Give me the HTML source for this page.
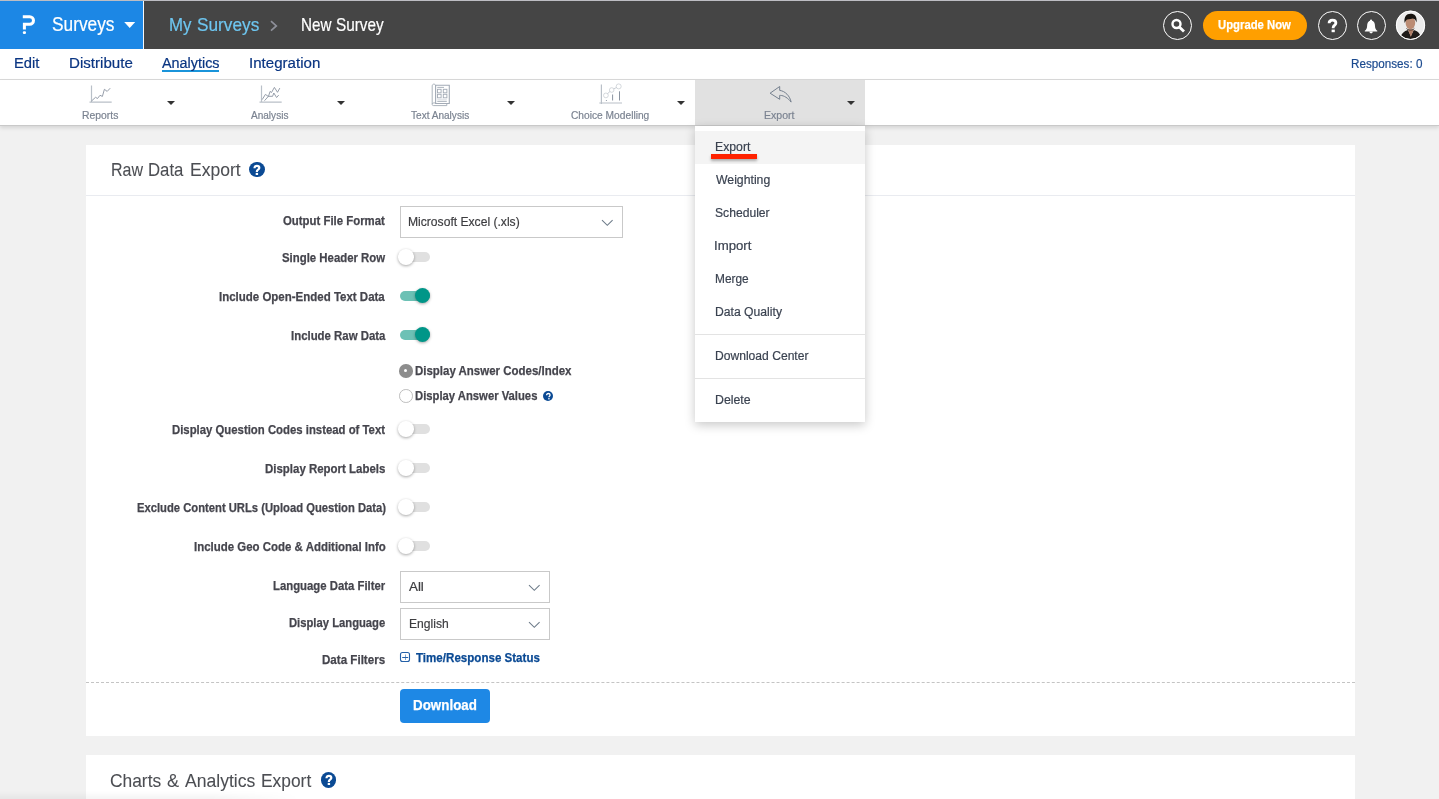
<!DOCTYPE html>
<html><head><meta charset="utf-8">
<style>
*{margin:0;padding:0;box-sizing:border-box}
html,body{width:1439px;height:799px;overflow:hidden}
body{background:#f1f1f1;font-family:"Liberation Sans",sans-serif;position:relative}
.a{position:absolute}
.t{position:absolute;white-space:nowrap;line-height:normal}
.top{left:0;top:0;width:1439px;height:1px;background:#bdbdc3}
.blue{left:0;top:1px;width:143px;height:48px;background:#1c87e5}
.sep{left:143px;top:1px;width:1px;height:48px;background:#f4f8fc}
.dark{left:144px;top:1px;width:1295px;height:48px;background:#454545}
.nav{left:0;top:49px;width:1439px;height:31px;background:#fff;border-bottom:1px solid #dadada}
.tool{left:0;top:80px;width:1439px;height:46px;background:#fff;border-bottom:1px solid #c9c9c9;box-shadow:0 2px 4px rgba(0,0,0,0.12)}
.expbg{left:695px;top:80px;width:170px;height:45px;background:#e1e1e1}
.card{left:86px;width:1269px;background:#fff}
.circ{border:1px solid #fff;border-radius:50%}
.tri{width:0;height:0;border-left:4px solid transparent;border-right:4px solid transparent;border-top:4px solid #333}
.sel{border:1px solid #c9c9c9;background:#fff}
.trk{width:30px;height:10px;border-radius:5px;background:#e0e0e0}
.knob{width:15.5px;height:15.5px;border-radius:50%;background:#fff;box-shadow:0 1px 3px rgba(0,0,0,0.35)}
.trkon{background:#6cc1b5}
.knobon{background:#009688;width:15px;height:15px}
.menu{left:695px;top:126px;width:170px;height:296px;background:#fff;box-shadow:0 3px 10px rgba(0,0,0,0.22)}
</style></head><body>
<div class="a top"></div>
<div class="a blue"></div>
<div class="a sep"></div>
<div class="a dark"></div>
<!-- logo P -->
<svg class="a" style="left:0;top:0" width="143" height="49">
<path d="M22.8 16.7 H29.7 A3.8 3.8 0 0 1 29.7 24.3 H24.4 V29.6" fill="none" stroke="#fff" stroke-width="3"/>
<rect x="22.8" y="31.2" width="3.2" height="2.8" rx="1.2" fill="#fff"/>
<path d="M124.2 22 L135.2 22 L129.7 28 Z" fill="#fff"/>
</svg>
<!-- breadcrumb chevron -->
<svg class="a" style="left:266px;top:18px" width="16" height="16"><path d="M5 3.2 L10.3 7.9 L5 12.6" fill="none" stroke="#8e909a" stroke-width="1.7"/></svg>
<!-- header right -->
<div class="a circ" style="left:1163px;top:11px;width:29px;height:29px"></div>
<svg class="a" style="left:1163px;top:11px" width="29" height="29"><circle cx="13.5" cy="13" r="4" fill="none" stroke="#fff" stroke-width="2.4"/><path d="M16.3 16 L21 20.6" stroke="#fff" stroke-width="2.8" stroke-linecap="butt"/></svg>
<div class="a" style="left:1203px;top:11px;width:104px;height:29px;border-radius:15px;background:#ff9f00"></div>
<div class="a circ" style="left:1318px;top:11px;width:29px;height:29px"></div>
<svg class="a" style="left:1318px;top:11px" width="29" height="29"><path d="M11.1 12.3 C11.1 10.2 12.6 9.2 14.5 9.2 C16.6 9.2 17.9 10.4 17.9 12.1 C17.9 14.3 15.2 14.5 15.2 16.4 V17.2" fill="none" stroke="#fff" stroke-width="2.8"/><rect x="13.6" y="18.6" width="3.2" height="2.6" fill="#fff"/></svg>
<div class="a circ" style="left:1357px;top:11px;width:29px;height:29px"></div>
<svg class="a" style="left:1357px;top:11px" width="29" height="29"><path d="M14.1 9.6 C17 9.9 18 12.2 18 15 C18 17.4 18.8 18.6 20.3 19.8 V20.4 H7.8 V19.8 C9.3 18.6 10.1 17.4 10.1 15 C10.1 12.2 11.1 9.9 14.1 9.6 Z" fill="#fff"/><circle cx="14.05" cy="9.5" r="1.1" fill="#fff"/><path d="M12.3 20.6 A1.8 1.8 0 0 0 15.9 20.6 Z" fill="#fff"/></svg>
<svg class="a" style="left:1395px;top:10px" width="31" height="31"><defs><clipPath id="av"><circle cx="15.5" cy="15.2" r="14"/></clipPath></defs>
<circle cx="15.5" cy="15.2" r="14.5" fill="#fff"/>
<g clip-path="url(#av)"><rect x="0" y="0" width="31" height="31" fill="#ececec"/>
<path d="M4.5 31 C5.5 24 9 21 13 20 L15.8 26 L18.8 20 C22.5 21 26 23.5 27 31 Z" fill="#1f1b19"/>
<path d="M13 19.5 H18.8 L15.8 27 Z" fill="#b07f68"/>
<ellipse cx="15.4" cy="13" rx="4.8" ry="6.2" fill="#bb8c74"/>
<path d="M11.5 18.5 C13 20.5 17.8 20.5 19.3 18.5" fill="none" stroke="#3a2a22" stroke-width="0.9"/>
<path d="M9.6 13 C8.6 7 11.5 3.8 15.5 3.8 C19.5 3.8 22.4 6.2 21.5 12.5 C20.8 10.5 20 9 17.8 8.6 C14.8 9.4 12.2 8.8 10.8 10.8 Z" fill="#17130f"/>
</g><circle cx="15.5" cy="15.2" r="14.2" fill="none" stroke="#fff" stroke-width="1"/></svg>

<div class="a nav"></div>
<div class="a" style="left:162px;top:70px;width:57px;height:2px;background:#1a94da"></div>

<div class="a tool"></div>
<div class="a expbg"></div>
<!-- toolbar icons -->
<svg class="a" style="left:0;top:80px" width="900" height="46" stroke="#8a93a0" fill="none">
<g transform="translate(0,-80)">
<path d="M91.5 85.6 V102.3 M89.5 102.2 H111.7" stroke-width="1.2" stroke="#b9c0c8"/>
<path d="M91.5 101 L95.5 97.3 L97.5 98.5 L100 95.3 L102.4 96.4 L104.4 89.3 L107.2 91.4 L110.2 88.2" stroke-width="0.9"/>
<path d="M261.5 85.6 V102.3 M259.5 102.2 H281.7" stroke-width="1.2" stroke="#b9c0c8"/>
<path d="M262.2 99.6 L265.4 94.4 L268.4 96.5 L270.1 91.4 L271.5 92.5 L274.4 87.4 L277.5 92.3 L279.8 88.1" stroke-width="0.9"/>
<path d="M264.5 100.7 L268.4 96.3 L272.6 96.3 L273.8 93 L276.6 97.5 L278.7 95.1" stroke-width="0.9"/>
<path d="M435.6 85.3 H449.3 V103.5 H435.6 Z" stroke-width="1.1" stroke="#a3abb6"/>
<path d="M435.6 86 C435.6 83.5 432.2 83.5 432.2 86 V104.5 C432.2 105.5 433 105.6 434 105.6 H446.8 V103.5 M432.2 104 C432.2 102.6 435.6 102.6 435.6 103.5" stroke-width="0.9" stroke="#a3abb6"/>
<path d="M437.3 87.4 H444" stroke-width="0.9" stroke="#a3abb6"/>
<rect x="437.5" y="89.3" width="3.6" height="3.5" stroke-width="0.9" stroke="#a3abb6"/>
<rect x="443.3" y="89.3" width="3.6" height="3.5" stroke-width="0.9" stroke="#a3abb6"/>
<rect x="437.5" y="94.3" width="3.6" height="3.5" stroke-width="0.9" stroke="#a3abb6"/>
<rect x="443.3" y="94.3" width="3.6" height="3.5" stroke-width="0.9" stroke="#a3abb6"/>
<rect x="437.3" y="98.6" width="9.5" height="1.8" fill="#e3e6ea" stroke="none"/><path d="M437.3 101.4 H446.8" stroke-width="0.9" stroke="#a3abb6"/>
<path d="M601.4 84.4 V104 M599.3 103 H622" stroke-width="1.2" stroke="#b9c0c8"/>
<circle cx="605.9" cy="95.4" r="2.4" stroke-width="0.7" stroke="#c3c8ce"/>
<circle cx="611.7" cy="90" r="2.3" stroke-width="0.7" stroke="#c3c8ce"/>
<circle cx="618.7" cy="86.4" r="2.5" stroke-width="0.7" stroke="#c3c8ce"/>
<path d="M607.6 93.6 L609.9 91.6 M613.8 88.8 L616.4 87.6" stroke-width="0.7" stroke="#b0b7c0"/>
<circle cx="606.4" cy="100.5" r="0.6" fill="#8a93a0" stroke="none"/>
<path d="M612.6 94.5 V100.5 M619.5 91.3 V100.5" stroke-width="1" stroke="#8a93a0"/>
<path d="M770.1 93.2 L779.7 86.5 V90.4 C785 91 790 96 791.1 102.1 C788 98 784 95.5 780.4 95.4 L779.7 95.4 V99.3 Z" stroke-width="1" stroke="#75808e" stroke-linejoin="round"/>
</g></svg>
<div class="a tri" style="left:167px;top:101px"></div>
<div class="a tri" style="left:337px;top:101px"></div>
<div class="a tri" style="left:507px;top:101px"></div>
<div class="a tri" style="left:677px;top:101px"></div>
<div class="a tri" style="left:847px;top:101px"></div>

<!-- card 1 -->
<div class="a card" style="top:145px;height:591px"></div>
<div class="a" style="left:86px;top:195px;width:1269px;height:1px;background:#e9ebf0"></div>
<div class="a" style="left:249.3px;top:161.8px;width:15.6px;height:15.6px;border-radius:50%;background:#0b4a94"></div>
<svg class="a" style="left:249.3px;top:161.8px" width="16" height="16"><path d="M5.5 6.2 C5.5 4.6 6.6 3.8 7.9 3.8 C9.3 3.8 10.3 4.7 10.3 6 C10.3 7.5 7.9 7.8 7.9 9.2 V10" fill="none" stroke="#fff" stroke-width="2.2"/><rect x="6.7" y="10.9" width="2.4" height="2.1" fill="#fff"/></svg>

<div class="a sel" style="left:400px;top:206px;width:223px;height:32px"></div>
<svg class="a" style="left:600px;top:218px" width="14" height="9"><path d="M2 2.2 L7.3 7.3 L12.6 2.2" fill="none" stroke="#6e7c8a" stroke-width="1.1"/></svg>

<div class="a trk" style="left:400px;top:252px"></div><div class="a knob" style="left:398.3px;top:249px"></div>
<div class="a trk trkon" style="left:400px;top:291px"></div><div class="a knob knobon" style="left:415px;top:288px"></div>
<div class="a trk trkon" style="left:400px;top:330px"></div><div class="a knob knobon" style="left:415px;top:327px"></div>

<div class="a" style="left:399px;top:364px;width:13.6px;height:13.6px;border-radius:50%;background:#8d8d8d"></div>
<div class="a" style="left:404.3px;top:369.3px;width:3px;height:3px;border-radius:50%;background:#fff"></div>
<div class="a" style="left:399px;top:389px;width:13.6px;height:13.6px;border-radius:50%;background:#fff;border:1px solid #bdbdbd"></div>
<div class="a" style="left:542.8px;top:390.5px;width:10.5px;height:10.5px;border-radius:50%;background:#0b4a94"></div>
<svg class="a" style="left:542.8px;top:390.5px" width="11" height="11"><path d="M3.6 4.2 C3.6 3 4.3 2.5 5.3 2.5 C6.4 2.5 7.1 3.1 7.1 4 C7.1 5.1 5.9 5.3 5.9 6.3" fill="none" stroke="#fff" stroke-width="1.3"/><rect x="5.2" y="7.1" width="1.4" height="1.3" fill="#fff"/></svg>

<div class="a trk" style="left:400px;top:424px"></div><div class="a knob" style="left:398.3px;top:421px"></div>
<div class="a trk" style="left:400px;top:463px"></div><div class="a knob" style="left:398.3px;top:460px"></div>
<div class="a trk" style="left:400px;top:502px"></div><div class="a knob" style="left:398.3px;top:499px"></div>
<div class="a trk" style="left:400px;top:541px"></div><div class="a knob" style="left:398.3px;top:538px"></div>

<div class="a sel" style="left:400px;top:571px;width:150px;height:32px"></div>
<svg class="a" style="left:526.5px;top:583px" width="14" height="9"><path d="M2 2.2 L7.3 7.3 L12.6 2.2" fill="none" stroke="#6e7c8a" stroke-width="1.1"/></svg>
<div class="a sel" style="left:400px;top:608px;width:150px;height:32px"></div>
<svg class="a" style="left:526.5px;top:620px" width="14" height="9"><path d="M2 2.2 L7.3 7.3 L12.6 2.2" fill="none" stroke="#6e7c8a" stroke-width="1.1"/></svg>

<svg class="a" style="left:399px;top:651px" width="12" height="12"><rect x="1.5" y="1.5" width="9" height="9" rx="2" fill="none" stroke="#2460a8" stroke-width="1.1"/><path d="M6.5 3.5 V9" stroke="#7fa3cf" stroke-width="1"/><path d="M3.2 6.5 H9.2" stroke="#2460a8" stroke-width="1"/></svg>

<div class="a" style="left:86px;top:682px;width:1269px;height:0;border-top:1px dashed #c4c4c4"></div>
<div class="a" style="left:400px;top:689px;width:90px;height:34px;border-radius:4px;background:#1e88e5"></div>

<!-- card 2 -->
<div class="a card" style="top:755px;height:60px"></div>
<div class="a" style="left:320.9px;top:772.4px;width:15.4px;height:15.4px;border-radius:50%;background:#0b4a94"></div>
<svg class="a" style="left:320.8px;top:772.3px" width="16" height="16"><path d="M5.5 6.2 C5.5 4.6 6.6 3.8 7.9 3.8 C9.3 3.8 10.3 4.7 10.3 6 C10.3 7.5 7.9 7.8 7.9 9.2 V10" fill="none" stroke="#fff" stroke-width="2.2"/><rect x="6.7" y="10.9" width="2.4" height="2.1" fill="#fff"/></svg>

<div class="t" style="left:52.39px;top:14.10px;font-size:19.33px;letter-spacing:0.0px;transform:scaleX(0.8948);transform-origin:0 0;font-weight:400;color:#fff;-webkit-text-stroke:0.2px currentColor;">Surveys</div>
<div class="t" style="left:169.25px;top:13.76px;font-size:18.68px;letter-spacing:0.0px;transform:scaleX(0.9035);transform-origin:0 0;font-weight:400;color:#6ec6f0;-webkit-text-stroke:0.2px currentColor;">My</div>
<div class="t" style="left:196.50px;top:13.76px;font-size:18.68px;letter-spacing:0.0px;transform:scaleX(0.9230);transform-origin:0 0;font-weight:400;color:#6ec6f0;-webkit-text-stroke:0.2px currentColor;">Surveys</div>
<div class="t" style="left:301.08px;top:13.76px;font-size:18.68px;letter-spacing:0.0px;transform:scaleX(0.8143);transform-origin:0 0;font-weight:400;color:#fff;-webkit-text-stroke:0.2px currentColor;">New</div>
<div class="t" style="left:335.98px;top:13.76px;font-size:18.68px;letter-spacing:0.0px;transform:scaleX(0.8206);transform-origin:0 0;font-weight:400;color:#fff;-webkit-text-stroke:0.2px currentColor;">Survey</div>
<div class="t" style="left:1218.22px;top:17.10px;font-size:13.23px;letter-spacing:0.0px;transform:scaleX(0.8559);transform-origin:0 0;font-weight:700;color:#fff;-webkit-text-stroke:0.25px currentColor;">Upgrade Now</div>
<div class="t" style="left:14.42px;top:54.90px;font-size:14.53px;letter-spacing:0.0px;transform:scaleX(1.0152);transform-origin:0 0;font-weight:400;color:#0a3582;-webkit-text-stroke:0.2px currentColor;">Edit</div>
<div class="t" style="left:68.79px;top:54.90px;font-size:14.53px;letter-spacing:0.0px;transform:scaleX(1.0404);transform-origin:0 0;font-weight:400;color:#0a3582;-webkit-text-stroke:0.2px currentColor;">Distribute</div>
<div class="t" style="left:161.90px;top:54.90px;font-size:14.53px;letter-spacing:0.0px;transform:scaleX(0.9903);transform-origin:0 0;font-weight:400;color:#0a3582;-webkit-text-stroke:0.2px currentColor;">Analytics</div>
<div class="t" style="left:248.59px;top:54.90px;font-size:14.53px;letter-spacing:0.0px;transform:scaleX(1.0395);transform-origin:0 0;font-weight:400;color:#0a3582;-webkit-text-stroke:0.2px currentColor;">Integration</div>
<div class="t" style="left:1350.67px;top:56.30px;font-size:13.08px;letter-spacing:0.0px;transform:scaleX(0.8928);transform-origin:0 0;font-weight:400;color:#1b4a8f;-webkit-text-stroke:0.2px currentColor;">Responses: 0</div>
<div class="t" style="left:81.67px;top:108.75px;font-size:10.90px;letter-spacing:0.0px;transform:scaleX(0.9534);transform-origin:0 0;font-weight:400;color:#7b8391;-webkit-text-stroke:0.2px currentColor;">Reports</div>
<div class="t" style="left:250.93px;top:108.75px;font-size:10.90px;letter-spacing:0.0px;transform:scaleX(0.9223);transform-origin:0 0;font-weight:400;color:#7b8391;-webkit-text-stroke:0.2px currentColor;">Analysis</div>
<div class="t" style="left:411.10px;top:108.75px;font-size:10.90px;letter-spacing:0.0px;transform:scaleX(0.9243);transform-origin:0 0;font-weight:400;color:#7b8391;-webkit-text-stroke:0.2px currentColor;">Text Analysis</div>
<div class="t" style="left:571.06px;top:108.75px;font-size:10.90px;letter-spacing:0.0px;transform:scaleX(0.9370);transform-origin:0 0;font-weight:400;color:#7b8391;-webkit-text-stroke:0.2px currentColor;">Choice Modelling</div>
<div class="t" style="left:764.16px;top:108.75px;font-size:10.90px;letter-spacing:0.0px;transform:scaleX(0.9665);transform-origin:0 0;font-weight:400;color:#7b8391;-webkit-text-stroke:0.2px currentColor;">Export</div>
<div class="t" style="left:110.52px;top:159.10px;font-size:18.60px;letter-spacing:0.0px;transform:scaleX(0.8594);transform-origin:0 0;font-weight:400;color:#4c4e53;-webkit-text-stroke:0.08px currentColor;">Raw</div>
<div class="t" style="left:148.36px;top:159.10px;font-size:18.60px;letter-spacing:0.0px;transform:scaleX(0.9014);transform-origin:0 0;font-weight:400;color:#4c4e53;-webkit-text-stroke:0.08px currentColor;">Data</div>
<div class="t" style="left:189.70px;top:159.10px;font-size:18.60px;letter-spacing:0.0px;transform:scaleX(0.9425);transform-origin:0 0;font-weight:400;color:#4c4e53;-webkit-text-stroke:0.08px currentColor;">Export</div>
<div class="t" style="left:283.34px;top:212.90px;font-size:13.08px;letter-spacing:0.0px;transform:scaleX(0.8707);transform-origin:0 0;font-weight:700;color:#45454d;-webkit-text-stroke:0.25px currentColor;">Output File Format</div>
<div class="t" style="left:281.92px;top:250.00px;font-size:13.08px;letter-spacing:0.0px;transform:scaleX(0.8706);transform-origin:0 0;font-weight:700;color:#45454d;-webkit-text-stroke:0.25px currentColor;">Single Header Row</div>
<div class="t" style="left:219.23px;top:289.00px;font-size:13.08px;letter-spacing:0.0px;transform:scaleX(0.8785);transform-origin:0 0;font-weight:700;color:#45454d;-webkit-text-stroke:0.25px currentColor;">Include Open-Ended Text Data</div>
<div class="t" style="left:290.54px;top:328.00px;font-size:13.08px;letter-spacing:0.0px;transform:scaleX(0.8723);transform-origin:0 0;font-weight:700;color:#45454d;-webkit-text-stroke:0.25px currentColor;">Include Raw Data</div>
<div class="t" style="left:172.14px;top:422.30px;font-size:13.08px;letter-spacing:0.0px;transform:scaleX(0.8681);transform-origin:0 0;font-weight:700;color:#45454d;-webkit-text-stroke:0.25px currentColor;">Display Question Codes instead of Text</div>
<div class="t" style="left:265.24px;top:461.20px;font-size:13.08px;letter-spacing:0.0px;transform:scaleX(0.8760);transform-origin:0 0;font-weight:700;color:#45454d;-webkit-text-stroke:0.25px currentColor;">Display Report Labels</div>
<div class="t" style="left:136.55px;top:500.00px;font-size:13.08px;letter-spacing:0.0px;transform:scaleX(0.8590);transform-origin:0 0;font-weight:700;color:#45454d;-webkit-text-stroke:0.25px currentColor;">Exclude Content URLs (Upload Question Data)</div>
<div class="t" style="left:193.64px;top:538.60px;font-size:13.08px;letter-spacing:0.0px;transform:scaleX(0.8764);transform-origin:0 0;font-weight:700;color:#45454d;-webkit-text-stroke:0.25px currentColor;">Include Geo Code &amp; Additional Info</div>
<div class="t" style="left:273.04px;top:578.00px;font-size:13.08px;letter-spacing:0.0px;transform:scaleX(0.8676);transform-origin:0 0;font-weight:700;color:#45454d;-webkit-text-stroke:0.25px currentColor;">Language Data Filter</div>
<div class="t" style="left:289.25px;top:614.90px;font-size:13.08px;letter-spacing:0.0px;transform:scaleX(0.8600);transform-origin:0 0;font-weight:700;color:#45454d;-webkit-text-stroke:0.25px currentColor;">Display Language</div>
<div class="t" style="left:322.43px;top:652.00px;font-size:13.08px;letter-spacing:0.0px;transform:scaleX(0.8861);transform-origin:0 0;font-weight:700;color:#45454d;-webkit-text-stroke:0.25px currentColor;">Data Filters</div>
<div class="t" style="left:414.94px;top:363.00px;font-size:13.08px;letter-spacing:0.0px;transform:scaleX(0.8772);transform-origin:0 0;font-weight:700;color:#45454d;-webkit-text-stroke:0.25px currentColor;">Display Answer Codes/Index</div>
<div class="t" style="left:414.95px;top:387.70px;font-size:13.08px;letter-spacing:0.0px;transform:scaleX(0.8621);transform-origin:0 0;font-weight:700;color:#45454d;-webkit-text-stroke:0.25px currentColor;">Display Answer Values</div>
<div class="t" style="left:408.28px;top:214.25px;font-size:13.44px;letter-spacing:0.0px;transform:scaleX(0.9011);transform-origin:0 0;font-weight:400;color:#3d3d40;-webkit-text-stroke:0.2px currentColor;">Microsoft Excel (.xls)</div>
<div class="t" style="left:408.91px;top:580.00px;font-size:12.06px;letter-spacing:0.0px;transform:scaleX(1.1079);transform-origin:0 0;font-weight:400;color:#3d3d40;-webkit-text-stroke:0.2px currentColor;">All</div>
<div class="t" style="left:408.63px;top:615.90px;font-size:13.30px;letter-spacing:0.0px;transform:scaleX(0.9095);transform-origin:0 0;font-weight:400;color:#3d3d40;-webkit-text-stroke:0.2px currentColor;">English</div>
<div class="t" style="left:415.65px;top:650.50px;font-size:12.35px;letter-spacing:0.0px;transform:scaleX(0.9376);transform-origin:0 0;font-weight:700;color:#0b4a94;-webkit-text-stroke:0.25px currentColor;">Time/Response Status</div>
<div class="t" style="left:412.86px;top:695.80px;font-size:15.12px;letter-spacing:0.0px;transform:scaleX(0.8862);transform-origin:0 0;font-weight:700;color:#fff;-webkit-text-stroke:0.25px currentColor;">Download</div>
<div class="t" style="left:110.37px;top:769.90px;font-size:18.31px;letter-spacing:0.0px;transform:scaleX(0.9492);transform-origin:0 0;font-weight:400;color:#4c4e53;-webkit-text-stroke:0.08px currentColor;">Charts</div>
<div class="t" style="left:167.10px;top:769.90px;font-size:18.31px;letter-spacing:0.0px;transform:scaleX(0.9864);transform-origin:0 0;font-weight:400;color:#4c4e53;-webkit-text-stroke:0.08px currentColor;">&amp;</div>
<div class="t" style="left:185.18px;top:769.90px;font-size:18.31px;letter-spacing:0.0px;transform:scaleX(0.9611);transform-origin:0 0;font-weight:400;color:#4c4e53;-webkit-text-stroke:0.08px currentColor;">Analytics</div>
<div class="t" style="left:261.31px;top:769.90px;font-size:18.31px;letter-spacing:0.0px;transform:scaleX(0.9497);transform-origin:0 0;font-weight:400;color:#4c4e53;-webkit-text-stroke:0.08px currentColor;">Export</div>
<div class="a" style="left:0;top:791px;width:300px;height:8px;background:linear-gradient(to bottom,rgba(0,0,0,0),rgba(0,0,0,0.045));-webkit-mask-image:linear-gradient(to right,#000 70%,transparent)"></div>

<!-- dropdown menu -->
<div class="a menu"></div>
<div class="a" style="left:695px;top:131px;width:170px;height:33px;background:#f4f4f4"></div>
<div class="a" style="left:695px;top:334px;width:170px;height:1px;background:#e3e3e3"></div>
<div class="a" style="left:695px;top:378px;width:170px;height:1px;background:#e3e3e3"></div>
<div class="t" style="left:714.72px;top:139.00px;font-size:13.08px;letter-spacing:0.0px;transform:scaleX(0.9364);transform-origin:0 0;font-weight:400;color:#3a4250;-webkit-text-stroke:0.2px currentColor;">Export</div>
<div class="t" style="left:715.62px;top:172.00px;font-size:13.08px;letter-spacing:0.0px;transform:scaleX(0.9363);transform-origin:0 0;font-weight:400;color:#3a4250;-webkit-text-stroke:0.2px currentColor;">Weighting</div>
<div class="t" style="left:715.13px;top:205.00px;font-size:13.08px;letter-spacing:0.0px;transform:scaleX(0.9280);transform-origin:0 0;font-weight:400;color:#3a4250;-webkit-text-stroke:0.2px currentColor;">Scheduler</div>
<div class="t" style="left:714.47px;top:238.00px;font-size:13.08px;letter-spacing:0.0px;transform:scaleX(1.0096);transform-origin:0 0;font-weight:400;color:#3a4250;-webkit-text-stroke:0.2px currentColor;">Import</div>
<div class="t" style="left:714.75px;top:271.00px;font-size:13.08px;letter-spacing:0.0px;transform:scaleX(0.9072);transform-origin:0 0;font-weight:400;color:#3a4250;-webkit-text-stroke:0.2px currentColor;">Merge</div>
<div class="t" style="left:714.73px;top:304.30px;font-size:13.08px;letter-spacing:0.0px;transform:scaleX(0.9309);transform-origin:0 0;font-weight:400;color:#3a4250;-webkit-text-stroke:0.2px currentColor;">Data Quality</div>
<div class="t" style="left:714.73px;top:348.40px;font-size:13.08px;letter-spacing:0.0px;transform:scaleX(0.9252);transform-origin:0 0;font-weight:400;color:#3a4250;-webkit-text-stroke:0.2px currentColor;">Download Center</div>
<div class="t" style="left:714.71px;top:392.20px;font-size:13.08px;letter-spacing:0.0px;transform:scaleX(0.9422);transform-origin:0 0;font-weight:400;color:#3a4250;-webkit-text-stroke:0.2px currentColor;">Delete</div>
<div class="a" style="left:711px;top:154px;width:46px;height:5px;background:#ff2200;box-shadow:0 2px 3px rgba(0,0,0,0.3)"></div>
</body></html>
